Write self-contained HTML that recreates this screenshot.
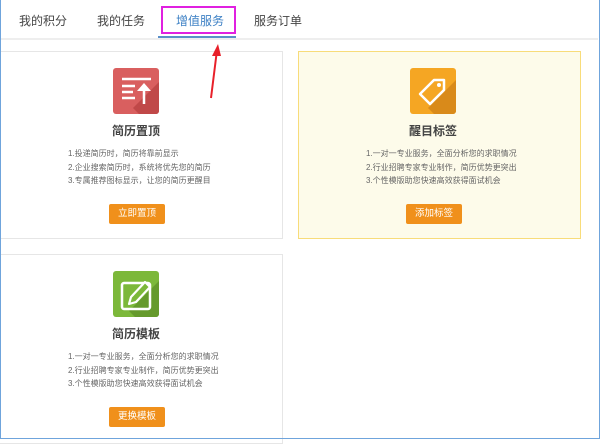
<!DOCTYPE html>
<html><head><meta charset="utf-8"><style>
*{margin:0;padding:0;box-sizing:border-box}
body{width:600px;height:439px;background:#fff;position:relative;overflow:hidden;font-family:"Liberation Sans","Noto Sans CJK SC",sans-serif;color:#555}
.frame{position:absolute;left:0;top:0;width:600px;height:439px;border:1px solid #6fa4dc;border-top:none}
.tab{position:absolute;top:12px;font-size:12px;color:#444}
.line{position:absolute;left:1px;right:2px;top:38px;height:2px;background:#eee}
.card{position:absolute;border:1px solid #e6e6e6;background:#fff}
.ic{position:absolute;width:46px;height:46px;border-radius:3px;overflow:hidden}
.t{position:absolute;font-size:12px;font-weight:bold;color:#444;width:200px;text-align:center}
.d{position:absolute;font-size:8px;color:#666;line-height:13.5px;white-space:nowrap}
.b{position:absolute;width:56px;height:20px;background:#f0901b;color:#fff;font-size:9.5px;text-align:center;line-height:20px;border-radius:2px}
</style></head><body>
<div class="tab" style="left:19px">我的积分</div>
<div class="tab" style="left:97px">我的任务</div>
<div class="tab" style="left:176px;color:#3b7fc4">增值服务</div>
<div class="tab" style="left:254px">服务订单</div>
<div class="line"></div>
<div style="position:absolute;left:158px;top:36px;width:78px;height:2px;background:#5a8fc8"></div>
<div style="position:absolute;left:161px;top:6px;width:75px;height:28px;border:2px solid #e020e0"></div>

<div class="card" style="left:-1px;top:51px;width:284px;height:188px"></div>
<div class="ic" style="left:113px;top:68px;background:#d95f5f">
<svg width="46" height="46"><path d="M20 40 L46 14 L46 46 L26 46Z" fill="#c04848"/><g stroke="#fff" stroke-width="2.5"><path d="M9 11H38M9 18H22M9 24H20M9 30H22"/><path d="M31 36V19"/></g><path d="M24 23L31 15L38 23Z" fill="#fff"/></svg></div>
<div class="t" style="left:36px;top:122px">简历置顶</div>
<div class="d" style="left:68px;top:147px">1.投递简历时，简历将靠前显示<br>2.企业搜索简历时，系统将优先您的简历<br>3.专属推荐图标显示，让您的简历更醒目</div>
<div class="b" style="left:109px;top:204px">立即置顶</div>

<div class="card" style="left:298px;top:51px;width:283px;height:188px;background:#fdfbea;border-color:#f8dc7a"></div>
<div class="ic" style="left:410px;top:68px;background:#f5a623">
<svg width="46" height="46"><path d="M18 40 L46 12 L46 46 L24 46Z" fill="#d98a1a"/><path d="M10 26 L24 12 L34 12 L34 22 L20 36 Z" fill="none" stroke="#fff" stroke-width="2.5" stroke-linejoin="round"/><circle cx="29" cy="17" r="2" fill="#fff"/></svg></div>
<div class="t" style="left:333px;top:122px">醒目标签</div>
<div class="d" style="left:366px;top:147px">1.一对一专业服务，全面分析您的求职情况<br>2.行业招聘专家专业制作，简历优势更突出<br>3.个性模版助您快速高效获得面试机会</div>
<div class="b" style="left:406px;top:204px">添加标签</div>

<div class="card" style="left:-1px;top:254px;width:284px;height:190px"></div>
<div class="ic" style="left:113px;top:271px;background:#7cb83a">
<svg width="46" height="46"><path d="M16 40 L46 10 L46 46 L22 46Z" fill="#659a2c"/><rect x="9" y="12" width="28" height="26" rx="2" fill="none" stroke="#fff" stroke-width="2.5"/><path d="M16 33 L18 26 L32 11 L37 16 L23 31 Z" fill="#7cb83a" stroke="#fff" stroke-width="2.2" stroke-linejoin="round"/></svg></div>
<div class="t" style="left:36px;top:325px">简历模板</div>
<div class="d" style="left:68px;top:350px">1.一对一专业服务，全面分析您的求职情况<br>2.行业招聘专家专业制作，简历优势更突出<br>3.个性模版助您快速高效获得面试机会</div>
<div class="b" style="left:109px;top:407px">更换模板</div>

<svg style="position:absolute;left:205px;top:42px" width="20" height="60"><path d="M6 56 L12 8" stroke="#e8202a" stroke-width="2"/><path d="M13 2 L7 14 L16 14Z" fill="#e8202a"/></svg>
<div class="frame"></div>
</body></html>
